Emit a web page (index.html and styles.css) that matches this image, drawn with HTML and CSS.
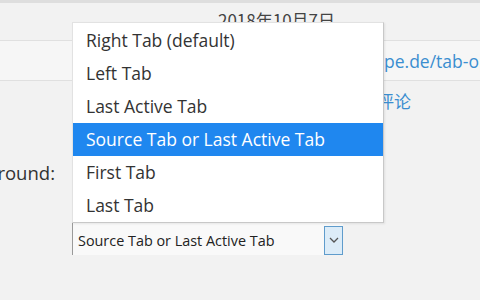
FILE: index.html
```html
<!DOCTYPE html>
<html lang="zh-CN">
<head>
<meta charset="UTF-8"/>
<title>Tab Options</title>
<link rel="stylesheet" href="styles.css">
</head>
<body>
<div class="page">
	<div class="row row-date">
		<span class="date">2018年10月7日</span>
	</div>
	<div class="row row-link">
		<a class="link" href="#"><span class="clip"><span>https://www.tabsco</span></span><span>pe.de/tab-options</span></a>
	</div>
	<div class="row row-comment">
		<a class="link cjk" href="#">评论</a>
	</div>
	<div class="row row-label">
		<div class="clip label-box"><span class="label">Open new tab in background:</span></div>
	</div>
	<div class="row row-select">
		<div class="select">
			<span class="select-text">Source Tab or Last Active Tab</span>
			<span class="select-btn">
				<svg width="10" height="6" viewBox="0 0 10 6"><path d="M1 1 L5 5 L9 1" fill="none" stroke="#555" stroke-width="1.3"/></svg>
			</span>
		</div>
	</div>

	<!-- open dropdown of the select -->
	<ul class="popup">
		<li>Right Tab (default)</li>
		<li>Left Tab</li>
		<li>Last Active Tab</li>
		<li class="on">Source Tab or Last Active Tab</li>
		<li>First Tab</li>
		<li>Last Tab</li>
	</ul>
</div>
</body>
</html>
```

FILE: styles.css
```css
	body{
		margin:0;
		background:#f2f2f2;
		font-family:"Open Sans","Noto Sans CJK SC",sans-serif;
		color:#333;
		overflow:hidden;
	}
	.page{
		position:relative;
		height:297px;
		overflow:hidden;
		border-top:3px solid #dedede;
	}
	.row{
		display:flex;
		align-items:center;
	}
	.clip{
		display:flex;
		justify-content:flex-end;
		white-space:nowrap;
	}
	.row-date{
		height:37px;
		padding-left:218px;
		align-items:flex-start;
		border-bottom:1px solid #e0e0e0;
	}
	.date{
		font-size:17px;
		line-height:17px;
		margin-top:8px;
		color:#444;
		font-family:"Noto Sans CJK SC",sans-serif;
	}
	.row-link{
		height:39px;
		background:#f6f6f6;
		border-bottom:1px solid #e0e0e0;
	}
	.link{
		display:flex;
		color:#3b8ed0;
		text-decoration:none;
		font-size:17.5px;
		white-space:nowrap;
	}
	.row-link .clip{
		width:384px;
	}
	.row-comment{
		height:38px;
		padding-left:377px;
	}
	.cjk{
		font-family:"Noto Sans CJK SC",sans-serif;
		font-size:17px;
	}
	.row-label{
		height:103px;
		align-items:flex-start;
	}
	.label-box{
		width:55px;
		padding-top:41px;
	}
	.label{
		font-size:18.5px;
		color:#333;
	}
	.row-select{
		padding-left:72px;
	}
	.select{
		width:271px;
		height:33px;
		display:flex;
		align-items:center;
		justify-content:space-between;
		background:#f9f9f9;
		border-left:1px solid #9a9a9a;
		border-top:1px solid #b0b0b0;
		box-sizing:border-box;
		padding-top:2px;
	}
	.select-text{
		font-size:14.4px;
		padding-left:5px;
		color:#222;
	}
	.select-btn{
		width:19px;
		height:29px;
		background:#dcecf8;
		border:1px solid #5f9ccc;
		box-sizing:border-box;
		display:flex;
		align-items:center;
		justify-content:center;
	}
	.popup{
		position:absolute;
		left:72px;
		top:19px;
		width:312px;
		margin:0;
		padding:1px 0 0 0;
		list-style:none;
		background:#fff;
		border:1px solid #e2e2e2;
		border-right:1px solid #c8c8c8;
		border-bottom:1px solid #c8c8c8;
		box-sizing:border-box;
		box-shadow:1px 1px 2px rgba(0,0,0,0.08);
	}
	.popup li{
		height:33px;
		line-height:33px;
		padding-left:13px;
		font-size:17.5px;
		color:#333;
		white-space:nowrap;
	}
	.popup li.on{
		background:#1f87ef;
		color:#fff;
	}
```
